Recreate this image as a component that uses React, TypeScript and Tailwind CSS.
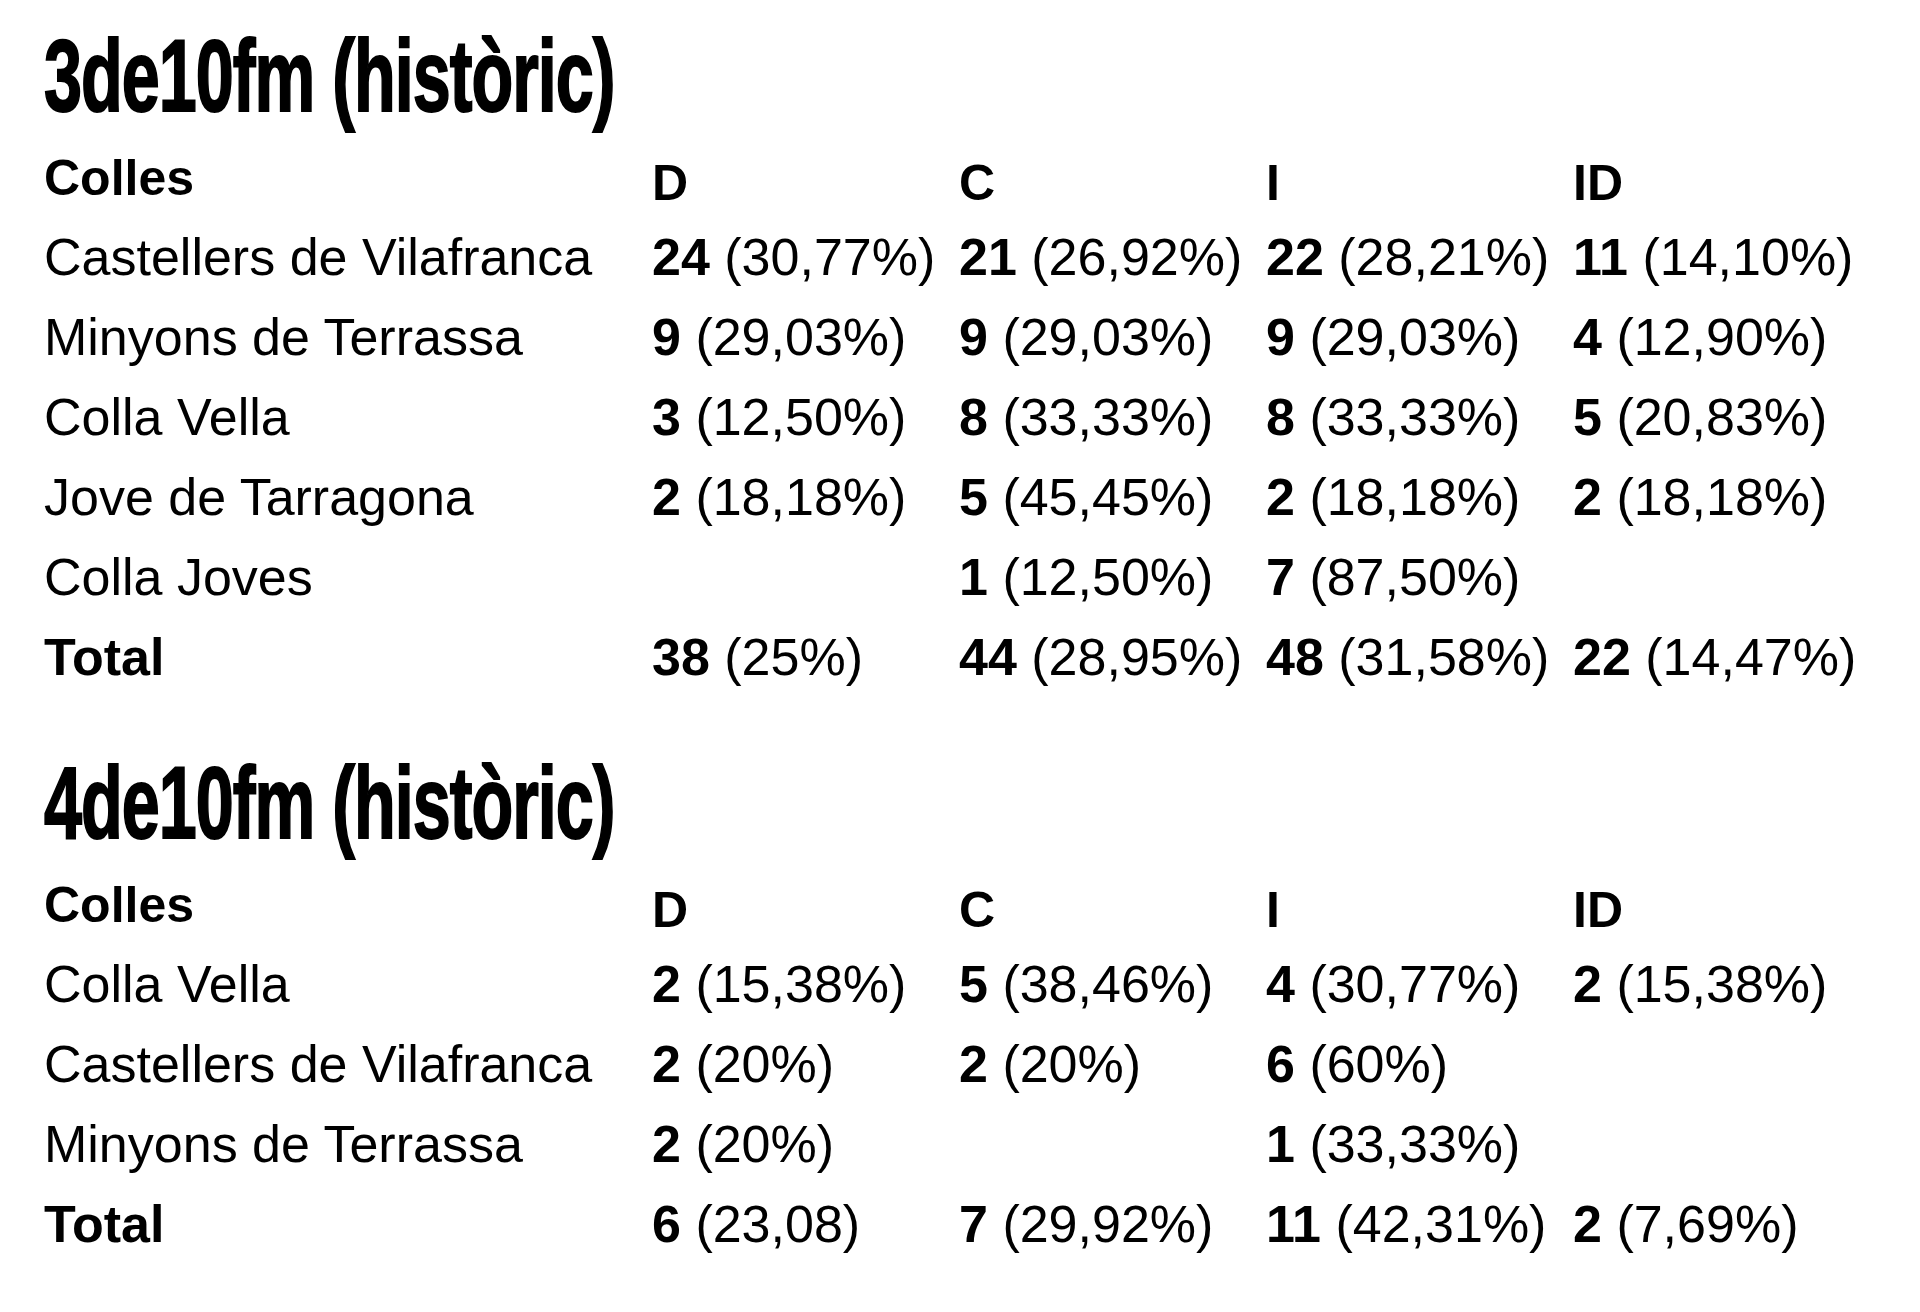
type Cell = [string, string] | null

type Row = { name: string; cells: Cell[]; total?: boolean }

const COLS = ['D', 'C', 'I', 'ID']

const TABLES: { title: string; rows: Row[] }[] = [
  {
    title: '3de10fm (històric)',
    rows: [
      { name: 'Castellers de Vilafranca', cells: [['24', '(30,77%)'], ['21', '(26,92%)'], ['22', '(28,21%)'], ['11', '(14,10%)']] },
      { name: 'Minyons de Terrassa', cells: [['9', '(29,03%)'], ['9', '(29,03%)'], ['9', '(29,03%)'], ['4', '(12,90%)']] },
      { name: 'Colla Vella', cells: [['3', '(12,50%)'], ['8', '(33,33%)'], ['8', '(33,33%)'], ['5', '(20,83%)']] },
      { name: 'Jove de Tarragona', cells: [['2', '(18,18%)'], ['5', '(45,45%)'], ['2', '(18,18%)'], ['2', '(18,18%)']] },
      { name: 'Colla Joves', cells: [null, ['1', '(12,50%)'], ['7', '(87,50%)'], null] },
      { name: 'Total', total: true, cells: [['38', '(25%)'], ['44', '(28,95%)'], ['48', '(31,58%)'], ['22', '(14,47%)']] },
    ],
  },
  {
    title: '4de10fm (històric)',
    rows: [
      { name: 'Colla Vella', cells: [['2', '(15,38%)'], ['5', '(38,46%)'], ['4', '(30,77%)'], ['2', '(15,38%)']] },
      { name: 'Castellers de Vilafranca', cells: [['2', '(20%)'], ['2', '(20%)'], ['6', '(60%)'], null] },
      { name: 'Minyons de Terrassa', cells: [['2', '(20%)'], null, ['1', '(33,33%)'], null] },
      { name: 'Total', total: true, cells: [['6', '(23,08)'], ['7', '(29,92%)'], ['11', '(42,31%)'], ['2', '(7,69%)']] },
    ],
  },
]

const GRID = 'grid grid-cols-[608px_307px_307px_307px_1fr]'

function Table({ title, rows }: { title: string; rows: Row[] }) {
  return (
    <section>
      <h1 className="h-[102px] text-[102px] leading-[102px] font-bold whitespace-nowrap origin-left scale-x-[0.67] tracking-[-1.5px] [-webkit-text-stroke:2px_black]">
        {title}
      </h1>
      <div className={`${GRID} mt-[22px] h-[68px] text-[50px] leading-[68px] font-bold`}>
        <div className="leading-[58px]">Colles</div>
        {COLS.map((c) => (
          <div key={c}>{c}</div>
        ))}
      </div>
      {rows.map((r) => (
        <div key={r.name} className={`${GRID} h-[80px] text-[52px] leading-[80px] whitespace-nowrap`}>
          <div className={r.total ? 'font-bold' : ''}>{r.name}</div>
          {r.cells.map((cell, i) => (
            <div key={i}>
              {cell && (
                <>
                  <span className="font-bold">{cell[0]}</span> {cell[1]}
                </>
              )}
            </div>
          ))}
        </div>
      ))}
    </section>
  )
}

export default function App() {
  return (
    <div className="min-h-[1312px] w-[1920px] bg-white text-black font-['Liberation_Sans',Arial,sans-serif] pl-[44px] pt-[25px]">
      <Table {...TABLES[0]} />
      <div className="mt-[55px]">
        <Table {...TABLES[1]} />
      </div>
    </div>
  )
}
